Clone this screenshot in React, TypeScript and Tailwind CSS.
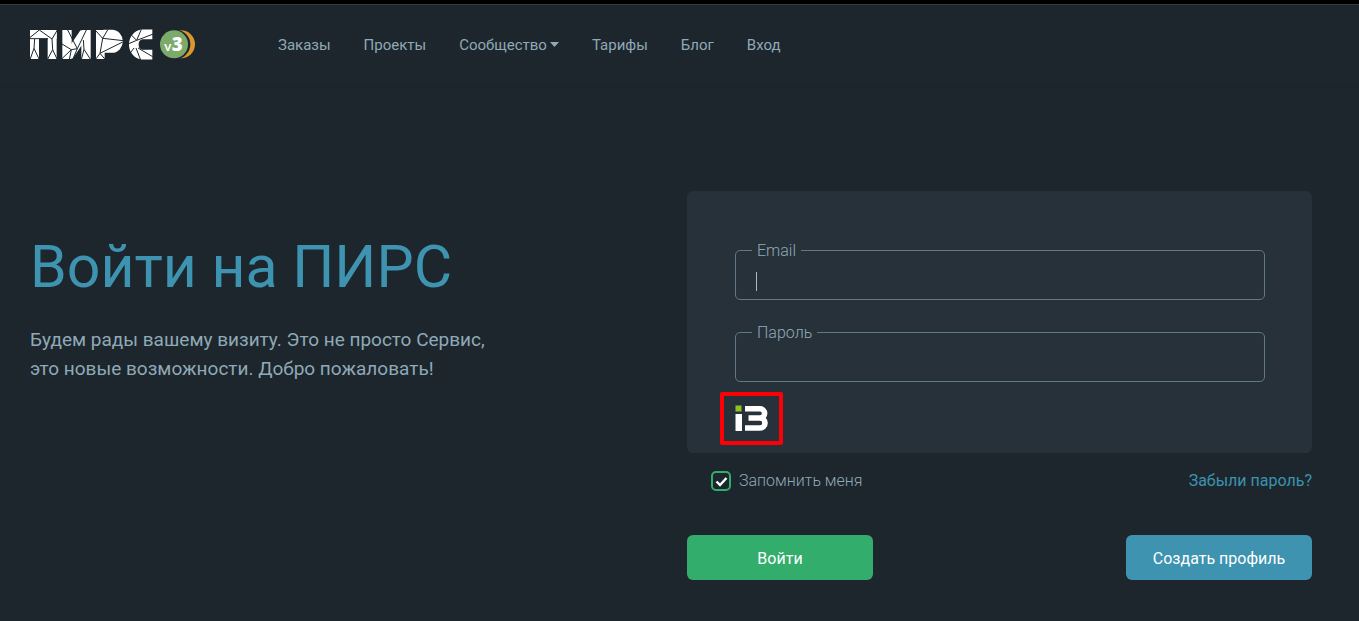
import React from "react";

function PirsLogo() {
  return (
    <svg viewBox="30 27 495 93" className="h-[31px] w-[165px]" role="img" aria-label="ПИРС v3">
      <g fill="#fff">
        <rect x="30" y="30" width="80" height="26" />
        <rect x="30" y="30" width="27" height="87" />
        <rect x="83" y="30" width="27" height="87" />
        <rect x="127" y="30" width="28" height="87" />
        <rect x="184" y="30" width="28" height="87" />
        <rect x="228" y="30" width="26" height="87" />
      </g>
      <g fill="none" stroke="#fff">
        <line x1="146" y1="108" x2="193" y2="39" strokeWidth="28" />
        <path d="M250 47 H276 A15 17 0 0 1 276 81 H250" strokeWidth="35" />
        <path d="M397 43 H366 A30 31 0 0 0 366 104 H397" strokeWidth="29" />
      </g>
      <g stroke="#1c262c" strokeWidth="3" fill="none" strokeLinejoin="bevel">
        <path d="M28 54 L58 30 L96 57 L112 30 M28 56 H84 M44 57 L42 85 L30 119 M42 85 L58 119 M96 57 L98 89 L82 119 M98 89 L112 119" />
        <path d="M142 28 L172 86 L154 89 L126 72 M154 89 L126 116 M154 89 L148 119 M172 86 L200 28 M172 86 L158 119 M190 60 L192 88 L184 119 M192 88 L212 119" />
        <path d="M226 31 L248 55 L264 28 M248 55 L310 62 M248 55 L240 100 L308 66 M240 100 L226 119 M240 100 L256 119" />
        <path d="M326 37 L350 61 L364 28 M350 61 L400 42 M350 61 L314 76 M342 84 L324 108 M348 84 L362 120 M354 84 L398 110" />
      </g>
      <circle cx="483" cy="73" r="42" fill="#dc952f" />
      <circle cx="467" cy="73" r="44" fill="#1c262c" />
      <circle cx="462" cy="73" r="42" fill="#7caa6a" />
      <text x="433" y="93" fill="#fff" fontFamily="Open Sans, sans-serif" fontWeight="600" fontSize="40">v</text>
      <text x="455" y="94" fill="#fff" fontFamily="Open Sans, sans-serif" fontWeight="800" fontSize="56">3</text>
    </svg>
  );
}

function PartnerMark() {
  return (
    <svg viewBox="0 0 33 27" className="h-[27px] w-[33px]" role="img" aria-label="iB">
      <rect x="0.5" y="0.5" width="6" height="6" fill="#8fc31f" />
      <rect x="0.5" y="9" width="6.5" height="17" fill="#fff" />
      <path
        d="M10 3.8 H25 A4.6 4.6 0 0 1 25 13 H13.5 M25 13 A5 5 0 0 1 25 23 H10"
        fill="none"
        stroke="#fff"
        strokeWidth="5.6"
      />
    </svg>
  );
}

const links = ["Заказы", "Проекты", "Сообщество", "Тарифы", "Блог", "Вход"];

function Header() {
  return (
    <header className="flex items-center gap-[83px] border-b border-[#1a2329] px-[30px] pt-6 pb-[26px]">
      <a href="#"><PirsLogo /></a>
      <nav className="flex items-center gap-[33px] text-[15px]">
        {links.map((label) => (
          <a key={label} href="#" className="flex items-center gap-[3px]">
            {label}
            {label === "Сообщество" && (
              <svg viewBox="0 0 9 5" className="h-[5px] w-[9px]" aria-hidden="true">
                <path d="M0 0H9L4.5 5Z" fill="currentColor" />
              </svg>
            )}
          </a>
        ))}
      </nav>
    </header>
  );
}

function Field({ id, label, type, focused = false }: { id: string; label: string; type: string; focused?: boolean }) {
  return (
    <div className="relative">
      <input
        id={id}
        type={type}
        className="block h-[50px] w-full rounded-[5px] border border-[#607986] bg-transparent px-5 pt-2 caret-transparent outline-none"
      />
      <label htmlFor={id} className="absolute -top-[11px] left-[17px] bg-[#27313a] px-[5px] font-light">
        {label}
      </label>
      {focused && <span className="absolute top-[22px] left-[21px] h-[19px] w-px bg-[#a9bac3]" />}
    </div>
  );
}

export default function App() {
  return (
    <div className="min-h-screen bg-[#1c262c] font-['Roboto',sans-serif] text-base leading-6 text-[#90a9b7]">
      <div className="h-[5px] border-b border-[#393939] bg-black" />
      <Header />
      <main className="grid grid-cols-2 gap-8 pt-[104px] pr-[47px] pb-10 pl-[30px]">
        <section className="pt-10">
          <h1 className="text-[59px] leading-[72px] text-[#3d93b0]">Войти на ПИРС</h1>
          <p className="mt-[22px] max-w-[480px] text-[19px] leading-[29px]">
            Будем рады вашему визиту. Это не просто Сервис, это новые возможности. Добро пожаловать!
          </p>
        </section>
        <form onSubmit={(e) => e.preventDefault()}>
          <div className="rounded-md bg-[#27313a] pt-[59px] pr-[47px] pb-2 pl-12">
            <div className="flex flex-col gap-8">
              <Field id="email" label="Email" type="email" focused />
              <Field id="password" label="Пароль" type="password" />
            </div>
            <div className="mt-[10px] -ml-[15px] flex h-[53px] w-[63px] items-center justify-center rounded-xs border-4 border-[#fb0007]">
              <PartnerMark />
            </div>
          </div>
          <div className="mt-4 flex items-center justify-between pl-6">
            <label className="flex items-center gap-2 font-light">
              <span className="relative flex size-5">
                <input
                  type="checkbox"
                  defaultChecked
                  className="peer size-5 appearance-none rounded-[5px] border-2 border-[#32ad6c]"
                />
                <svg viewBox="0 0 20 20" className="pointer-events-none absolute inset-0 hidden peer-checked:block" aria-hidden="true">
                  <path d="M5.5 10.5L9 14L15.5 7" fill="none" stroke="#fff" strokeWidth="2.4" />
                </svg>
              </span>
              Запомнить меня
            </label>
            <a href="#" className="text-[#3d93b0]">Забыли пароль?</a>
          </div>
          <div className="mt-[42px] flex justify-between text-white">
            <button type="submit" className="h-[45px] w-[186px] rounded-md bg-[#32ad6c] pt-0.5">Войти</button>
            <button type="button" className="h-[45px] w-[186px] rounded-md bg-[#3d93b0] pt-0.5">Создать профиль</button>
          </div>
        </form>
      </main>
    </div>
  );
}
